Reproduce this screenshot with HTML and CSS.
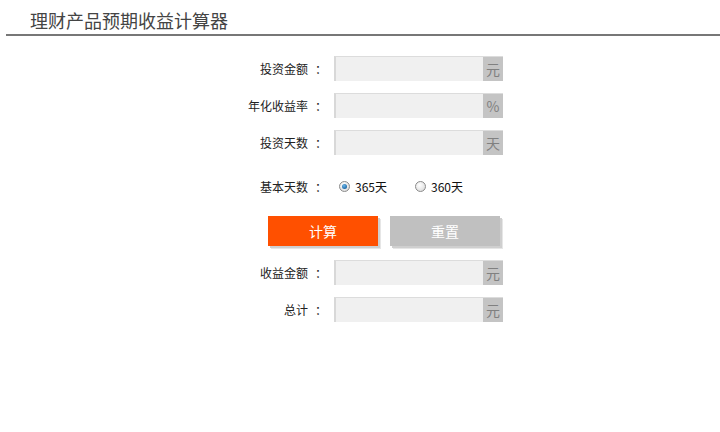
FILE: index.html
```html
<!DOCTYPE html>
<html lang="zh">
<head>
<meta charset="utf-8">
<title>理财产品预期收益计算器</title>
<link rel="stylesheet" href="styles.css">
</head>
<body>
<header class="head">
  <h1 class="title">理财产品预期收益计算器</h1>
</header>
<main class="form">
  <div class="row">
    <label class="lbl">投资金额<span class="colon">：</span></label>
    <div class="field"><input class="inp" type="text"><span class="unit">元</span></div>
  </div>
  <div class="row">
    <label class="lbl">年化收益率<span class="colon">：</span></label>
    <div class="field"><input class="inp" type="text"><span class="unit">%</span></div>
  </div>
  <div class="row">
    <label class="lbl">投资天数<span class="colon">：</span></label>
    <div class="field"><input class="inp" type="text"><span class="unit">天</span></div>
  </div>
  <div class="row radio-row">
    <label class="lbl">基本天数<span class="colon">：</span></label>
    <div class="radios">
      <span class="opt"><span class="radio checked"></span>365天</span>
      <span class="opt"><span class="radio"></span>360天</span>
    </div>
  </div>
  <div class="btns">
    <button class="btn calc">计算</button>
    <button class="btn reset">重置</button>
  </div>
  <div class="row">
    <label class="lbl">收益金额<span class="colon">：</span></label>
    <div class="field"><input class="inp" type="text"><span class="unit">元</span></div>
  </div>
  <div class="row">
    <label class="lbl">总计<span class="colon">：</span></label>
    <div class="field"><input class="inp" type="text"><span class="unit">元</span></div>
  </div>
</main>
</body>
</html>
```
FILE: styles.css
```css
* { box-sizing: border-box; }
body {
  margin: 0;
  font-family: "Noto Sans CJK SC", "Noto Sans", sans-serif;
  color: #333;
  background: #fff;
}
.head {
  margin-left: 6px;
  padding: 8px 0 2px 24px;
  border-bottom: 2px solid #777;
}
.title {
  margin: 0;
  font-size: 18px;
  font-weight: normal;
  line-height: 24px;
  color: #444;
}
.form {
  margin: 20px 0 0 234px;
  display: flex;
  flex-direction: column;
}
.row {
  display: flex;
  align-items: center;
  height: 25px;
  margin-bottom: 12px;
}
.lbl {
  width: 93px;
  display: flex;
  justify-content: flex-end;
  font-size: 12px;
  color: #222;
  margin-right: 7px;
  white-space: nowrap;
}
.colon {
  margin-left: 7px;
}
.field {
  display: flex;
  width: 169px;
  height: 25px;
  border-top: 1px solid #dcdcdc;
  border-left: 2px solid #d8d8d8;
  background: #f0f0f0;
}
.inp {
  flex: 1;
  min-width: 0;
  border: 0;
  background: transparent;
  outline: none;
  padding: 0 4px;
  font-size: 12px;
}
.unit {
  width: 20px;
  height: 24px;
  background: #c4c4c4;
  color: #808080;
  font-size: 14px;
  display: flex;
  align-items: center;
  justify-content: center;
}
.radio-row {
  margin-top: 6px;
  height: 26px;
  margin-bottom: 17px;
}
.radios {
  display: flex;
  align-items: center;
  padding-left: 5px;
  font-size: 12px;
  color: #111;
}
.opt {
  display: flex;
  align-items: center;
  margin-right: 28px;
}
.radio {
  width: 11px;
  height: 11px;
  border-radius: 50%;
  border: 1px solid #8a8a8a;
  background: radial-gradient(circle at 40% 35%, #fff 0%, #e6e6e6 60%, #cfcfcf 100%);
  margin-right: 5px;
  position: relative;
}
.radio.checked::after {
  content: "";
  position: absolute;
  left: 2px;
  top: 2px;
  width: 5px;
  height: 5px;
  border-radius: 50%;
  background: radial-gradient(circle at 40% 35%, #6db6e8 0%, #1e6aa8 70%, #0e4a80 100%);
}
.btns {
  display: flex;
  gap: 12px;
  padding-left: 34px;
  margin-bottom: 14px;
}
.btn {
  width: 110px;
  height: 30px;
  border: 0;
  color: #fff;
  font-family: inherit;
  font-size: 14px;
  box-shadow: 2px 2px 0 #cfcfcf, 3px 3px 0 #e6e6e6;
  padding: 0;
}
.calc { background: #ff5000; }
.reset { background: #c0c0c0; }
```
